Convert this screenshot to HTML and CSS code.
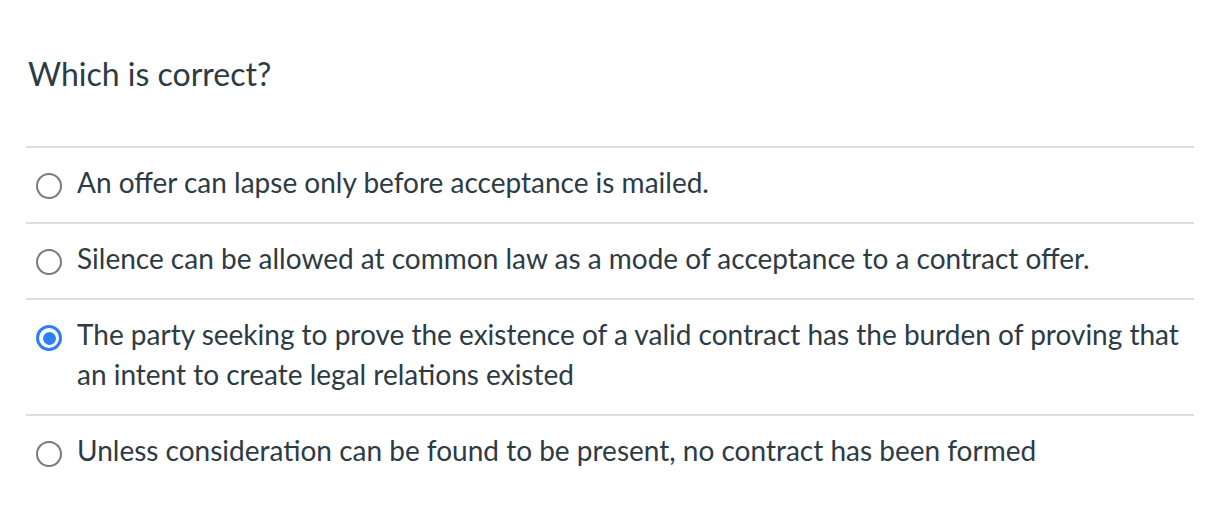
FILE: index.html
```html
<!DOCTYPE html>
<html lang="en">
<head>
<meta charset="utf-8">
<title>Quiz question</title>
<link rel="stylesheet" href="styles.css">
</head>
<body>
<div class="question">
  <h2 class="question-text">Which is correct?</h2>
  <ul class="answers">
    <li class="answer">
      <span class="radio"></span>
      <span class="answer-text">An offer can lapse only before acceptance is mailed.</span>
    </li>
    <li class="answer">
      <span class="radio"></span>
      <span class="answer-text">Silence can be allowed at common law as a mode of acceptance to a contract offer.</span>
    </li>
    <li class="answer">
      <span class="radio checked"></span>
      <span class="answer-text">The party seeking to prove the existence of a valid contract has the burden of proving that an intent to create legal relations existed</span>
    </li>
    <li class="answer">
      <span class="radio"></span>
      <span class="answer-text">Unless consideration can be found to be present, no contract has been formed</span>
    </li>
  </ul>
</div>
</body>
</html>
```

FILE: styles.css
```css
html, body {
  margin: 0;
  padding: 0;
  background: #ffffff;
}

body {
  font-family: Lato, "Noto Sans", sans-serif;
  color: #2d3b45;
}

.question {
  padding: 0 32px 0 26px;
}

.question-text {
  margin: 0;
  padding: 52px 0 50px 2px;
  font-size: 32px;
  font-weight: 400;
  line-height: 44px;
}

.answers {
  list-style: none;
  margin: 0;
  padding: 0;
}

.answer {
  display: flex;
  align-items: flex-start;
  gap: 15px;
  border-top: 2px solid #dddddd;
  padding: 14px 0 20px 10px;
}

.answer-text {
  font-size: 28px;
  line-height: 40px;
  flex: 1;
}

.radio {
  flex: none;
  box-sizing: border-box;
  width: 26px;
  height: 26px;
  margin-top: 11px;
  border: 2px solid #7a7a7a;
  border-radius: 50%;
  background: #fff;
  display: flex;
  align-items: center;
  justify-content: center;
}

.radio.checked {
  border: 3px solid #2d7ff5;
}

.radio.checked::after {
  content: "";
  width: 13px;
  height: 13px;
  border-radius: 50%;
  background: #2d7ff5;
}
```
